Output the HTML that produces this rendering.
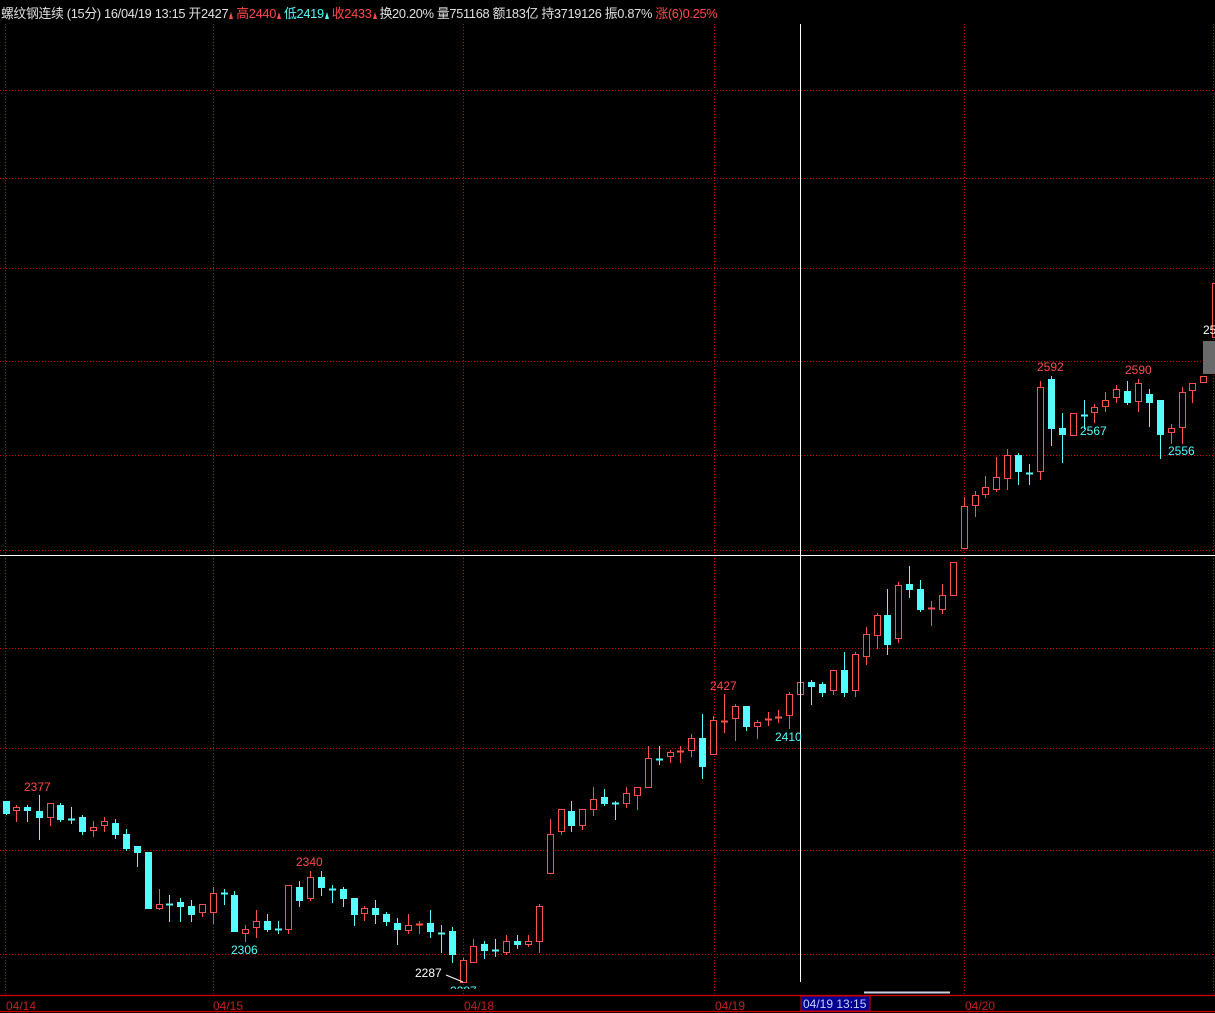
<!DOCTYPE html>
<html><head><meta charset="utf-8"><style>
html,body{margin:0;padding:0;background:#000;width:1215px;height:1013px;overflow:hidden}
#top{position:absolute;left:1px;top:3px;font:12.8px "Liberation Sans","Noto Sans CJK SC",sans-serif;color:#e0e0e0;white-space:nowrap;letter-spacing:-0.3px}
.r{color:#ff4848}.c{color:#54fcfc}
.a{display:inline-block;width:0;height:0;border-left:2px solid transparent;border-right:2px solid transparent;border-bottom:7px solid currentColor;margin:0 3px 0 1px;vertical-align:-1px}
svg{position:absolute;left:0;top:0}
svg text{font-family:"Liberation Sans",sans-serif;font-size:12px}
</style></head><body>
<svg id="s" width="1215" height="1013" xmlns="http://www.w3.org/2000/svg">
<defs><clipPath id="cl"><rect x="0" y="0" width="1215" height="989"/></clipPath></defs>
<g stroke="#d00000" stroke-width="1" stroke-dasharray="1 2" fill="none">
<path d="M0 90.5H1215M0 178.5H1215M0 268.5H1215M0 361.5H1215M0 455.5H1215M0 550.5H1215M0 648.5H1215M0 748.5H1215M0 850.5H1215M0 954.5H1215"/>
<path d="M5.5 24V995M213.5 24V995M463.5 24V995M714.5 24V995M964.5 24V995M1213.5 24V995"/>
</g>
<g id="cd"></g>
<rect x="1203" y="341" width="12" height="33" fill="#6a6a6a"/>
<path d="M800.5 24V982M0 555.5H1215" stroke="#fff" stroke-width="1"/>
<path d="M864 992.5H950" stroke="#c8d0e0" stroke-width="2"/>
<path d="M0 995.5H1215M0 1011.5H1215" stroke="#d00000" stroke-width="1.2"/>
<rect x="801" y="996" width="69" height="15" fill="#000090" stroke="#d00000"/>
<text x="803" y="1008" fill="#c8d0ff">04/19 13:15</text>
<g fill="#c02020">
<text x="6" y="1010">04/14</text><text x="213" y="1010">04/15</text><text x="464" y="1010">04/18</text><text x="715" y="1010">04/19</text><text x="965" y="1010">04/20</text>
</g>
<g fill="#ff4848">
<text x="24" y="791">2377</text><text x="296" y="866">2340</text><text x="710" y="690">2427</text><text x="1037" y="371">2592</text><text x="1125" y="374">2590</text>
</g>
<g fill="#54fcfc">
<text x="231" y="954">2306</text><text x="775" y="741">2410</text><text x="1080" y="435">2567</text><text x="1168" y="455">2556</text><text x="450" y="995" clip-path="url(#cl)">2287</text>
</g>
<text x="415" y="977" fill="#fff">2287</text>
<text x="1203" y="334" fill="#fff">25</text>
<path d="M446 975L463 982" stroke="#fff"/>
</svg>
<div id="top">螺纹钢连续 (15分) 16/04/19 13:15 开2427<span class="a r"></span><span class="r">高2440</span><span class="a r"></span><span class="c">低2419</span><span class="a c"></span><span class="r">收2433</span><span class="a r"></span>换20.20% 量751168 额183亿 持3719126 振0.87% <span class="r">涨(6)0.25%</span></div>
<script>
var d=[[5.5,801,813,801,814,0],[16,807,810,805,821,1],[27,807,810,805,821,0],[38.5,811,817,795,839,0],[49.5,803,817,803,825,1],[60,805,819,803,821,0],[71,819,819,807,823,0],[82,817,831,815,834,0],[93,827,830,821,836,1],[104,821,825,817,831,1],[115,823,834,819,838,0],[126,834,848,829,850,0],[137,846,852,846,866,0],[148,852,908,852,908,0],[159,904,908,889,909,1],[169,904,904,895,921,0],[180,902,906,898,921,0],[191,906,914,900,921,0],[202,904,912,904,916,1],[213,893,912,887,923,1],[224,893,893,889,904,0],[234,895,931,891,931,0],[245,929,933,925,941,1],[256,921,927,910,937,1],[267,921,929,914,931,0],[278,929,929,921,933,0],[288,885,929,885,933,1],[299,887,900,881,906,0],[310,877,898,871,900,1],[321,877,887,871,895,0],[332,889,889,885,902,0],[343,889,898,887,906,0],[354,898,914,898,925,0],[364,908,913,906,920,1],[375,908,914,900,923,0],[386,914,921,912,925,0],[397,923,929,918,944,0],[408,925,930,914,933,1],[419,924,924,921,933,1],[430,923,931,910,937,0],[441,933,933,925,952,0],[452,931,954,927,962,0],[463,960,982,958,982,1],[473,946,962,939,962,1],[484,944,950,941,958,0],[495,950,950,939,956,0],[506,941,952,935,954,1],[517,941,944,935,948,0],[528,941,944,935,946,1],[539,906,941,904,952,1],[550,834,873,819,873,1],[561,809,831,809,834,1],[571,811,825,801,831,0],[582,809,825,809,829,1],[593,799,809,787,815,1],[604,797,803,789,805,0],[615,803,803,801,819,0],[626,793,803,787,807,1],[637,787,795,787,809,1],[648,758,787,746,787,1],[659,759,759,746,764,0],[670,752,756,750,762,1],[680,751,751,746,762,1],[691,738,750,734,756,1],[702,738,766,714,778,0],[713,720,754,716,754,1],[724,721,721,694,732,1],[735,706,718,704,740,1],[746,706,726,706,730,0],[757,722,726,720,738,1],[768,719,719,712,725,1],[778,717,717,710,722,1],[789,694,715,692,728,1],[800,682,694,668,709,1],[811,682,686,680,704,0],[822,684,692,682,696,0],[833,670,690,670,694,1],[844,670,692,652,696,0],[855,654,690,652,696,1],[866,634,656,627,664,1],[877,615,635,613,648,1],[887,615,644,589,654,0],[898,585,638,582,642,1],[909,584,589,566,597,0],[920,589,609,580,611,0],[931,608,608,601,625,1],[942,595,609,584,613,1],[953,562,595,562,595,1],[964,506,548,497,548,1],[975,495,505,491,516,1],[985,487,494,476,497,1],[996,477,489,457,491,1],[1007,455,478,449,489,1],[1018,455,471,453,484,0],[1029,473,473,464,484,0],[1040,387,471,381,479,1],[1051,379,428,376,445,0],[1062,428,434,413,462,0],[1073,413,435,413,435,1],[1084,415,415,400,428,0],[1094,407,412,404,422,1],[1105,400,406,392,411,1],[1116,389,397,385,402,1],[1127,391,402,381,404,0],[1138,383,401,379,411,1],[1149,394,402,389,426,0],[1160,400,434,400,458,0],[1171,428,432,424,443,1],[1182,392,427,387,443,1],[1192,383,390,383,402,1],[1203,376,382,376,382,1],[1214.5,283,337,280,340,1]];
var h='';d.forEach(function(k){var x=Math.round(k[0]),col=k[5]?'#ff5050':'#54fcfc';
h+='<path d="M'+(x+.5)+' '+k[3]+'V'+(k[4]+1)+'" stroke="'+col+'"/>';
if(k[1]==k[2]){h+='<path d="M'+(x-3)+' '+(k[1]+.5)+'H'+(x+4)+'" stroke="'+col+'" stroke-width="2"/>';}
else if(k[5]){h+='<rect x="'+(x-2.5)+'" y="'+(k[1]+.5)+'" width="6" height="'+(k[2]-k[1])+'" fill="#000" stroke="'+col+'"/>';}
else{h+='<rect x="'+(x-3)+'" y="'+k[1]+'" width="7" height="'+(k[2]-k[1]+1)+'" fill="'+col+'"/>';}});
document.getElementById('cd').innerHTML=h;
</script>
</body></html>
